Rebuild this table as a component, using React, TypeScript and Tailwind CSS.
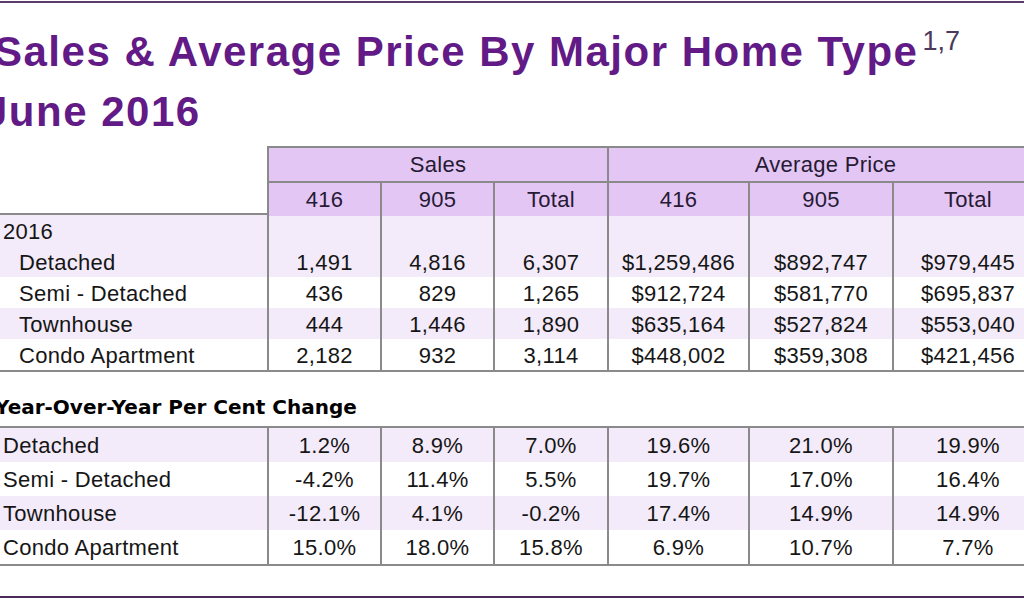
import React from "react";

const COLS = "grid grid-cols-[267px_113px_113px_114px_141px_144px_150px]";
const LINE = "border-[#8a8a8a]";

const SALES_2016 = [
  ["Detached", "1,491", "4,816", "6,307", "$1,259,486", "$892,747", "$979,445"],
  ["Semi - Detached", "436", "829", "1,265", "$912,724", "$581,770", "$695,837"],
  ["Townhouse", "444", "1,446", "1,890", "$635,164", "$527,824", "$553,040"],
  ["Condo Apartment", "2,182", "932", "3,114", "$448,002", "$359,308", "$421,456"],
];

const YOY = [
  ["Detached", "1.2%", "8.9%", "7.0%", "19.6%", "21.0%", "19.9%"],
  ["Semi - Detached", "-4.2%", "11.4%", "5.5%", "19.7%", "17.0%", "16.4%"],
  ["Townhouse", "-12.1%", "4.1%", "-0.2%", "17.4%", "14.9%", "14.9%"],
  ["Condo Apartment", "15.0%", "18.0%", "15.8%", "6.9%", "10.7%", "7.7%"],
];

function Row({ cells, shaded, height, indent }: { cells: string[]; shaded: boolean; height: string; indent: string }) {
  return (
    <div className={`${COLS} ${height} ${shaded ? "bg-[#f4ebfa]" : "bg-white"}`}>
      <div className={`flex items-center whitespace-nowrap ${indent}`}>{cells[0]}</div>
      {cells.slice(1).map((c, i) => (
        <div key={i} className={`flex items-center justify-center border-l-2 ${LINE}`}>
          {c}
        </div>
      ))}
    </div>
  );
}

export default function App() {
  return (
    <div className="flex h-[600px] w-[1024px] flex-col overflow-hidden bg-white font-[family-name:'Liberation_Sans',Arial,sans-serif] text-[22px] tracking-[0.3px] text-[#161616]">
      <div className="mt-px h-[2px] shrink-0 bg-[#5b3b6b]" />

      <div className="mt-[19px] shrink-0 text-[42px] font-bold leading-[60px] tracking-[1.5px] text-[#621a86]">
        <div className="-ml-[6px] whitespace-nowrap">
          Sales &amp; Average Price By Major Home Type
          <span className="relative top-[6px] ml-[4px] align-top text-[27px] font-normal leading-none tracking-normal text-[#4b3a5b]">
            1,7
          </span>
        </div>
        <div className="-ml-[16px] whitespace-nowrap">June 2016</div>
      </div>

      {/* sales + average price */}
      <div className="mt-[4px] w-[1042px] shrink-0">
        <div className={`${COLS} h-[35px] text-[#261a34]`}>
          <div />
          <div className={`col-span-3 flex items-center justify-center border-t-2 border-l-2 ${LINE} bg-[#e4c6f5]`}>
            Sales
          </div>
          <div className={`col-span-3 flex items-center justify-center border-t-2 border-l-2 ${LINE} bg-[#e4c6f5]`}>
            Average Price
          </div>
        </div>
        <div className={`${COLS} h-[32px] text-[#261a34]`}>
          <div />
          {["416", "905", "Total", "416", "905", "Total"].map((h, i) => (
            <div key={i} className={`flex items-center justify-center border-t-2 border-l-2 ${LINE} bg-[#e4c6f5]`}>
              {h}
            </div>
          ))}
        </div>
        <div className={`border-y-2 ${LINE}`}>
          <Row cells={["2016", "", "", "", "", "", ""]} shaded height="h-[31px]" indent="pl-[3px]" />
          {SALES_2016.map((r, i) => (
            <Row key={r[0]} cells={r} shaded={i % 2 === 0} height="h-[31px]" indent="pl-[19px]" />
          ))}
        </div>
      </div>

      <div className="mt-[23px] -ml-[5px] shrink-0 whitespace-nowrap font-[family-name:'DejaVu_Sans',Verdana,sans-serif] text-[20px] font-bold leading-[24px] tracking-normal text-black">
        Year-Over-Year Per Cent Change
      </div>

      {/* year over year change */}
      <div className={`mt-[7px] w-[1042px] shrink-0 border-y-2 ${LINE}`}>
        {YOY.map((r, i) => (
          <Row key={r[0]} cells={r} shaded={i % 2 === 0} height="h-[34px]" indent="pl-[3px]" />
        ))}
      </div>

      <div className="mt-[30px] h-[2px] shrink-0 bg-[#4a2a5a]" />
    </div>
  );
}
